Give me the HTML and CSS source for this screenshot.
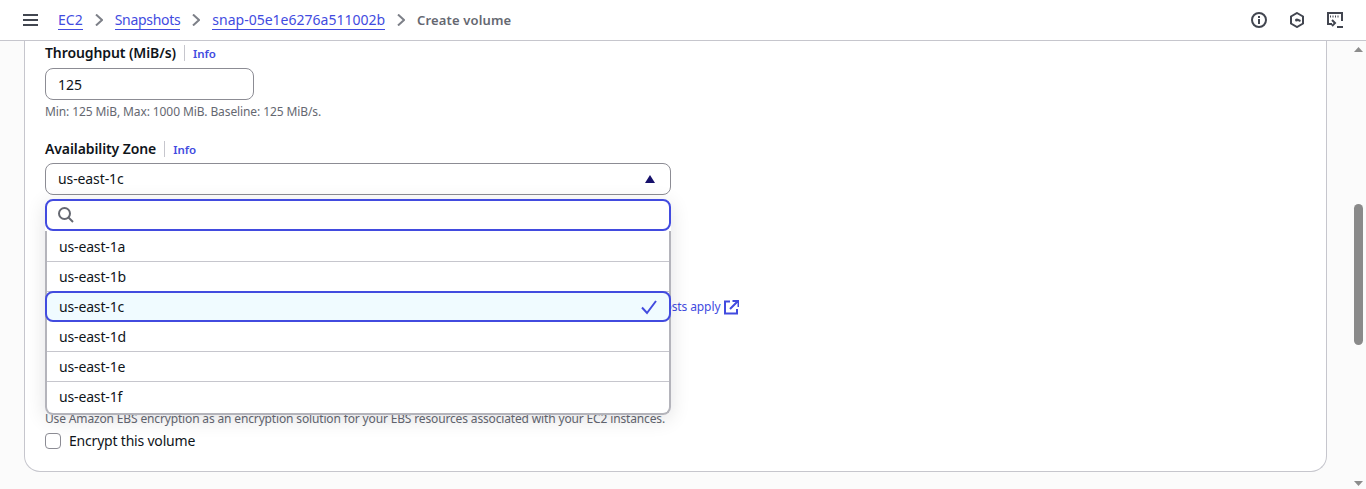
FILE: index.html
```html
<!DOCTYPE html>
<html lang="en">
<head>
<meta charset="utf-8">
<title>Create volume</title>
<link rel="stylesheet" href="styles.css">
</head>
<body>
<header class="topbar">
  <svg class="menu" width="15" height="14" viewBox="0 0 15 14"><path d="M0 2h15M0 7h15M0 12h15" fill="none" stroke="#424650" stroke-width="2"/></svg>
  <nav class="crumbs">
    <a class="crumb" href="#">EC2</a>
    <svg class="chev" width="8" height="12" viewBox="0 0 8 12"><path d="M1 .5L7 6l-6 5.500" fill="none" stroke="#7d8088" stroke-width="2"/></svg>
    <a class="crumb crumb-tight" href="#">Snapshots</a>
    <svg class="chev" width="8" height="12" viewBox="0 0 8 12"><path d="M1 .5L7 6l-6 5.500" fill="none" stroke="#7d8088" stroke-width="2"/></svg>
    <a class="crumb" href="#">snap-05e1e6276a511002b</a>
    <svg class="chev" width="8" height="12" viewBox="0 0 8 12"><path d="M1 .5L7 6l-6 5.500" fill="none" stroke="#7d8088" stroke-width="2"/></svg>
    <span class="crumb-current">Create volume</span>
  </nav>
  <div class="tools">
    <svg width="16" height="16" viewBox="0 0 16 16"><circle cx="8" cy="8" r="7" fill="none" stroke="#424650" stroke-width="2"/><path d="M8 7v5M8 4v2" stroke="#424650" stroke-width="2"/></svg>
    <svg width="16" height="16" viewBox="0 0 16 16"><path d="M8 1l6 3.500v7L8 15l-6-3.500v-7z" fill="none" stroke="#424650" stroke-width="2"/><circle cx="7.500" cy="8" r="1.500" fill="#424650"/><path d="M8 7.500l3.500 1.500" fill="none" stroke="#424650" stroke-width="2"/></svg>
    <svg width="16" height="16" viewBox="0 0 16 16"><path d="M5 12H1V1h14v8" fill="none" stroke="#424650" stroke-width="2"/><path d="M3 4.500h1M5.500 4.500h1M8 4.500h1M10.500 4.500h1" stroke="#424650" stroke-width="2"/><path d="M5 8l3 3-3 3" fill="none" stroke="#424650" stroke-width="2"/><path d="M10 15h6" stroke="#424650" stroke-width="2"/></svg>
  </div>
</header>

<main class="page">
  <section class="card">
    <div class="field">
      <div class="label-row"><span class="label">Throughput (MiB/s)</span><a class="info" href="#">Info</a></div>
      <div class="input input-short">125</div>
      <p class="hint">Min: 125 MiB, Max: 1000 MiB. Baseline: 125 MiB/s.</p>
    </div>

    <div class="field field-az">
      <div class="label-row"><span class="label">Availability Zone</span><a class="info" href="#">Info</a></div>
      <div class="select-wrap">
        <div class="input select">
          <span>us-east-1c</span>
          <svg width="10" height="8" viewBox="0 0 10 8"><path d="M5 0l5 8H0z" fill="#16106b"/></svg>
        </div>
        <div class="dropdown">
          <div class="search">
            <svg width="16" height="16" viewBox="0 0 16 16"><circle cx="6.500" cy="6.500" r="5.500" fill="none" stroke="#656871" stroke-width="2"/><path d="M10.500 10.500L15 15" stroke="#656871" stroke-width="2"/></svg>
          </div>
          <ul class="options">
            <li class="option">us-east-1a</li>
            <li class="option">us-east-1b</li>
            <li class="option selected">us-east-1c
              <svg width="16" height="16" viewBox="0 0 16 16"><path d="M1 8.500L6 14 15 2" fill="none" stroke="#424bdf" stroke-width="2"/></svg>
            </li>
            <li class="option">us-east-1d</li>
            <li class="option">us-east-1e</li>
            <li class="option">us-east-1f</li>
          </ul>
        </div>
      </div>
    </div>

    <div class="costs">
      <a class="ext-link" href="#">Costs apply
        <svg width="15" height="15" viewBox="0 0 15 15"><path d="M6 1.500H1v12h12V9" fill="none" stroke="#424bdf" stroke-width="2"/><path d="M6 9l7.500-7.500M8.500 1h6v6" fill="none" stroke="#424bdf" stroke-width="2"/></svg>
      </a>
    </div>

    <p class="hint enc-hint">Use Amazon EBS encryption as an encryption solution for your EBS resources associated with your EC2 instances.</p>
    <label class="check"><span class="box"></span>Encrypt this volume</label>
  </section>
</main>

<div class="scrollbar">
  <svg class="arrow" width="9" height="5" viewBox="0 0 9 5"><path d="M4.500 0L9 5H0z" fill="#8c8c8c"/></svg>
  <div class="thumb"></div>
  <svg class="arrow arrow-down" width="9" height="5" viewBox="0 0 9 5"><path d="M4.500 5L9 0H0z" fill="#8c8c8c"/></svg>
</div>
</body>
</html>
```
FILE: styles.css
```css
* { box-sizing: border-box; }
html, body { margin: 0; height: 489px; overflow: hidden; }
body {
  background: #fbfbfb;
  color: #0f141a;
  font-family: "Noto Sans", sans-serif;
  font-size: 14px;
  line-height: 20px;
}
a { color: #424bdf; text-decoration: none; }

.topbar {
  height: 41px;
  background: #fff;
  border-bottom: 1px solid #c6c6cd;
  display: flex;
  align-items: center;
  padding: 0 23px 0 23px;
}
.menu { margin-right: 20px; }
.crumbs { display: flex; align-items: center; gap: 12px; font-size: 14px; }
.crumb { border-bottom: 1px solid #424bdf; line-height: 19px; }
.crumb-tight { letter-spacing: -.3px; }
.crumb-current { color: #656871; font-weight: 600; font-size: 13px; letter-spacing: .15px; }
.tools { margin-left: auto; display: flex; gap: 22px; align-items: center; }

.page { padding: 0 39px 0 24px; }
.card {
  height: 431px;
  background: #fff;
  border: 1px solid #c6c6cd;
  border-top: 0;
  border-radius: 0 0 16px 16px;
  padding: 2px 20px 0;
  position: relative;
}
.field-az { margin-top: 17px; }
.label-row { display: flex; align-items: center; height: 20px; }
.label { font-size: 14px; font-weight: 600; letter-spacing: -.1px; padding-right: 8px; border-right: 1px solid #c6c6cd; line-height: 16px; }
.info { font-size: 11.500px; font-weight: 600; margin: 1px 0 0 8px; }
.input {
  border: 1px solid #8c8c94;
  border-radius: 8px;
  background: #fff;
  display: flex;
  align-items: center;
  padding: 0 12px;
  font-size: 14px;
  letter-spacing: -.1px;
  height: 32px;
}
.input-short { width: 209px; margin-top: 5px; padding-top: 2px; letter-spacing: 0; }
.hint { margin: 2px 0 0; font-size: 12px; letter-spacing: -.1px; line-height: 20px; color: #656871; }
.select-wrap { position: relative; margin-top: 4px; width: 626px; }
.select { justify-content: space-between; padding-right: 15px; }
.dropdown {
  position: absolute;
  z-index: 2;
  left: 0;
  right: 0;
  top: 36px;
  background: #fff;
  border-radius: 8px;
  box-shadow: 0 4px 20px rgba(0, 7, 22, .12);
}
.search {
  height: 32px;
  border: 2px solid #424bdf;
  border-radius: 8px;
  background: #fff;
  display: flex;
  align-items: center;
  padding-left: 11px;
}
.options {
  list-style: none;
  margin: 0;
  padding: 1px 0;
  height: 184px;
  border: 1px solid #b4b4bb;
  border-width: 0 2px 2px;
  border-radius: 0 0 8px 8px;
}
.option {
  height: 30px;
  display: flex;
  align-items: center;
  justify-content: space-between;
  padding: 0 12px;
  font-size: 14px;
  letter-spacing: -.15px;
  border-bottom: 1px solid #c6c6cd;
}
.option:last-child { border-bottom: 0; }
.option.selected {
  background: #f0fbff;
  border: 2px solid #424bdf;
  border-radius: 8px;
  margin: -1px -2px 0;
  height: 31px;
}
.costs { display: flex; margin-top: 102px; padding-left: 612px; }
.ext-link { font-size: 12px; letter-spacing: -.1px; display: flex; align-items: center; gap: 4px; }
.hint.enc-hint { margin-top: 92px; letter-spacing: -.15px; }
.check { display: flex; align-items: center; gap: 8px; font-size: 14px; letter-spacing: -.2px; margin-top: 2px; }
.box { width: 16px; height: 16px; border: 1px solid #8c8c94; border-radius: 4px; background: #fff; }

.scrollbar {
  position: absolute;
  top: 41px;
  right: 0;
  width: 15px;
  height: 448px;
  background: #fbfbfb;
}
.arrow { position: absolute; left: 3px; top: 6px; }
.arrow-down { top: auto; bottom: 3px; }
.thumb {
  position: absolute;
  left: 3px;
  top: 163px;
  width: 9px;
  height: 141px;
  border-radius: 5px;
  background: #8a8a8a;
}
```
